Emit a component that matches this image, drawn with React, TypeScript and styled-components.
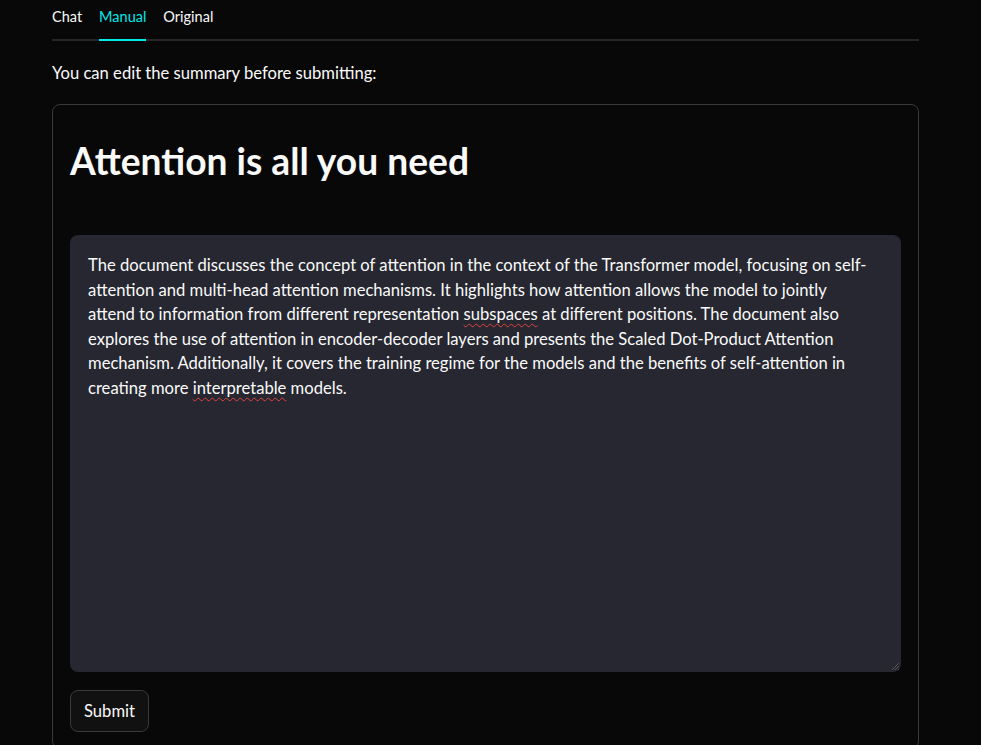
import React from "react";
import styled, { createGlobalStyle } from "styled-components";

const Global = createGlobalStyle`
  html, body { margin: 0; padding: 0; background: #080808; }
  body { font-family: "Lato", "Noto Sans", sans-serif; color: #fafafa; }
  * { box-sizing: border-box; }
`;

const Page = styled.main`
  padding: 0 62px 0 52px;
  min-height: 745px;
  overflow: hidden;
`;

const TabList = styled.div`
  display: flex;
  gap: 17px;
  height: 41px;
  border-bottom: 2px solid #262626;
`;

const Tab = styled.button<{ $active?: boolean }>`
  background: none;
  border: none;
  padding: 8px 0 0 0;
  margin-bottom: -2px;
  height: 41px;
  display: flex;
  align-items: flex-start;
  font-family: inherit;
  font-size: 14.5px;
  color: ${(p) => (p.$active ? "#00e8e8" : "#fafafa")};
  border-bottom: 2px solid ${(p) => (p.$active ? "#00eaea" : "transparent")};
  cursor: pointer;
`;

const Caption = styled.p`
  margin: 20px 0 0 0;
  font-size: 16.6px;
  line-height: 24px;
`;

const Card = styled.section`
  margin-top: 19px;
  border: 1px solid #3a3a3a;
  border-radius: 8px;
  padding: 16px 17px 16px 17px;
  display: flex;
  flex-direction: column;
  gap: 18px;
`;

const Heading = styled.h1`
  margin: 14px 0 30px 0;
  font-size: 37.2px;
  font-weight: 700;
  line-height: 52px;
`;

const EditorWrap = styled.div`
  position: relative;
  height: 437px;
  border-radius: 8px;
  background: #262730;
`;

const Editor = styled.div`
  height: 100%;
  padding: 18px 32px 18px 18px;
  font-size: 16.6px;
  line-height: 24.6px;
  color: #fafafa;
  outline: none;
  white-space: pre-wrap;
`;

const Misspelled = styled.span`
  text-decoration: underline wavy #e0443e;
  text-decoration-thickness: 1px;
  text-underline-offset: 3px;
`;

const Grip = styled.svg`
  position: absolute;
  right: 1px;
  bottom: 1px;
`;

const SubmitButton = styled.button`
  align-self: flex-start;
  height: 42px;
  padding: 0 13px;
  border: 1px solid #3a3a3a;
  border-radius: 8px;
  background: #111111;
  color: #fafafa;
  font-family: inherit;
  font-size: 16.6px;
  cursor: pointer;
`;

export default function App() {
  return (
    <>
      <Global />
      <Page>
        <TabList>
          <Tab>Chat</Tab>
          <Tab $active>Manual</Tab>
          <Tab>Original</Tab>
        </TabList>
        <Caption>You can edit the summary before submitting:</Caption>
        <Card>
          <Heading>Attention is all you need</Heading>
          <EditorWrap>
            <Editor contentEditable suppressContentEditableWarning spellCheck={false}>
              The document discusses the concept of attention in the context of the Transformer model, focusing on self-attention and multi-head attention mechanisms. It highlights how attention allows the model to jointly attend to information from different representation <Misspelled>subspaces</Misspelled> at different positions. The document also explores the use of attention in encoder-decoder layers and presents the Scaled Dot-Product Attention mechanism. Additionally, it covers the training regime for the models and the benefits of self-attention in creating more <Misspelled>interpretable</Misspelled> models.
            </Editor>
            <Grip width="10" height="10" viewBox="0 0 10 10">
              <path d="M9 2 L2 9 M9 5 L5 9 M9 8 L8 9" stroke="#555" strokeWidth="1" />
            </Grip>
          </EditorWrap>
          <SubmitButton>Submit</SubmitButton>
        </Card>
      </Page>
    </>
  );
}
